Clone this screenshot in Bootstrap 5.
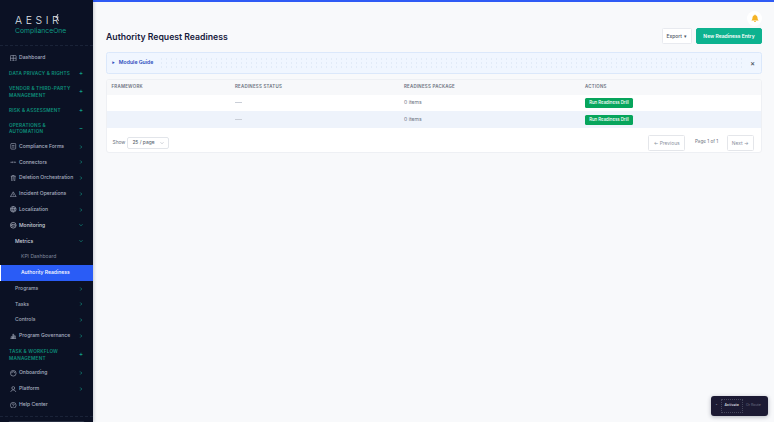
<!DOCTYPE html>
<html lang="en">
<head>
<meta charset="UTF-8">
<title>Authority Request Readiness</title>
<link href="https://cdn.jsdelivr.net/npm/bootstrap@5.3.2/dist/css/bootstrap.min.css" rel="stylesheet">
<style>
html, body { height: 100%; overflow: hidden; }
body { font-family: Inter, "Liberation Sans", sans-serif; font-size: 5px; background: #f8f9fb; color: #1f2937; }
.top-strip { height: 2px; background: #2f5bf5; }
.side { width: 93px; height: 422px; background: #0b1124; flex: none; overflow: hidden; box-shadow: 1px 0 3px rgba(15,23,42,.2); position: relative; }
.brand { height: 46px; padding: 15px 0 0 15px; border-bottom: 1px dashed #1a2338; }
.brand-name { font-size: 10.5px; letter-spacing: 3.6px; color: #dfe2e8; line-height: 12px; font-weight: 300; position: relative; }
.brand-name svg { position: absolute; left: 40px; top: -1px; width: 4px; height: 8px; }
.brand-sub { font-size: 6.8px; color: #0f9a83; line-height: 8px; }
.side-item { display: flex; align-items: center; height: 15.8px; padding: 0 10px 0 10px; color: #a9b0c0; font-weight: 500; font-size: 5.05px; }
.side-item svg.ic { width: 6.5px; height: 6.5px; margin-right: 2.5px; flex: none; }
.side-item .lbl { flex: 1; white-space: nowrap; }
.side-item .chev { width: 4px; height: 4px; flex: none; }
.side-item.sub { padding-left: 15px; color: #a0a8ba; }
.side-item.subsub { padding-left: 21px; color: #7f879b; font-weight: 400; }
.side-item.now { background: #2a5cf6; color: #fff; border-left: 1px solid #fff; padding-left: 20px; }
.side-item.open { color: #cfd3de; }
.side-head { display: flex; align-items: center; padding: 4.3px 10px 4.3px 9px; color: #0d8f7a; font-weight: 600; font-size: 4.7px; letter-spacing: .2px; line-height: 6.4px; }
.side-head .lbl { flex: 1; padding-right: 6px; }
.side-head .sym { width: 4px; text-align: center; font-size: 6px; color: #12a08a; }
.side-foot { position: absolute; left: 0; right: 0; top: 416px; height: 8px; border-top: 1px dashed #1a2338; padding: 4px 8px 0; }
.side-foot div { height: 6px; border: 1px solid #2a3145; border-radius: 2px; }
.page { min-width: 0; padding: 2px 12px 0 13px; position: relative; }
.bell-wrap { height: 10px; position: relative; }
.bell { position: absolute; right: 0; top: 8.5px; width: 15px; height: 15px; background: #fff; border-radius: 50%; display: flex; align-items: center; justify-content: center; }
.head-row { padding-top: 16px; height: 40px; }
.page-title { font-size: 8.7px; font-weight: 600; color: #17203b; margin: 1px 0 0; line-height: 16px; }
.btn-exp { background: #fff; border: 1px solid #e8eaef; color: #4b5563; font-size: 4.9px; font-weight: 500; height: 16px; width: 30px; padding: 0; border-radius: 1.5px; line-height: 14px; }
.btn-new { background: #0db28f; border: 1px solid #0db28f; color: #fff; font-size: 5px; font-weight: 600; height: 16px; width: 66px; padding: 0; border-radius: 2px; line-height: 14px; }
.guide { height: 22px; background: #f0f6ff; border: 1px solid #dbe8fb; border-radius: 2.5px; padding: 0 5px; color: #2c4dbd; font-weight: 600; font-size: 5.15px; }
.guide .arrow { font-size: 3px; margin-right: 4px; vertical-align: .5px; }
.guide .dots { height: 12px; margin: 0 6px 0 6px; background-image: radial-gradient(circle, #e2ebf8 .5px, transparent .6px); background-size: 5px 4px; }
.guide .shut { color: #4b5563; font-size: 7px; line-height: 1; margin-right: 1px; }
.grid-card { margin-top: 5px; background: #fff; border: 1px solid #eef0f4; border-radius: 3px; overflow: hidden; }
.grid-table { width: 100%; table-layout: fixed; margin: 0; border-collapse: collapse; }
.grid-table th { height: 14.5px; background: #f7f8fa; padding: 0 4.5px; font-size: 4.4px; font-weight: 600; letter-spacing: .25px; color: #6b7280; white-space: nowrap; }
.grid-table td { height: 16.7px; padding: 0 4.5px; font-size: 5.1px; color: #6b7280; vertical-align: middle; }
.grid-table tr.alt td { background-color: #eef3fb; background-image: radial-gradient(circle, #e4eaf5 .5px, transparent .6px); background-size: 2px 2px; }
.dash { display: block; width: 7px; height: 1px; background: #c9ced7; }
.btn-drill { background: #07a55c; color: #fff; font-size: 4.3px; font-weight: 500; border: 0; border-radius: 1.5px; height: 10px; width: 48px; padding: 0; line-height: 10px; white-space: nowrap; }
.grid-foot { height: 24.5px; padding: 5px 7px 0 5.5px; color: #6b7280; font-size: 4.9px; }
.size-pick { width: 41.5px; height: 12px; border: 1px solid #e2e5ea; border-radius: 2px; padding: 0 4px; color: #4b5563; background: #fff; margin-left: 2px; }
.size-pick svg { width: 4px; height: 4px; }
.pg-btn { height: 16px; background: #fff; border: 1px solid #e4e6ea; border-radius: 1.5px; color: #8a919e; font-size: 4.9px; padding: 0; line-height: 14px; }
.pg-prev { width: 37.5px; }
.pg-next { width: 27.5px; }
.pg-text { margin: 0 8.5px 0 9.5px; font-size: 4.6px; }
.float-bar { position: absolute; right: 6px; top: 396px; width: 57px; height: 20px; background: #1c1a33; border-radius: 3px; box-shadow: 0 1px 4px rgba(15,23,42,.3); color: #6f7286; font-size: 3.6px; gap: 3px; padding: 0 4.500px; white-space: nowrap; }
.float-bar b { color: #cfd2dc; font-weight: 600; border: 1px dotted #45475c; padding: 3px 3px; }
</style>
</head>
<body>
<div class="top-strip"></div>
<div class="d-flex" style="margin-top:-2px">
  <nav class="side">
    <div class="brand">
      <div class="brand-name">AESIR<svg viewBox="0 0 4 8" fill="none" stroke="#dfe2e8" stroke-width=".9"><path d="M3 0L1.500 3M.5 3.500l3-.5M2 3.500L3.500 7"/></svg></div>
      <div class="brand-sub">ComplianceOne</div>
    </div>
    <div style="padding-top:4px">
      <div class="side-item"><svg class="ic" viewBox="0 0 16 16" fill="none" stroke="currentColor" stroke-width="1.5"><rect x="1" y="1" width="14" height="14" rx="2"/><path d="M8 1v14M1 8h14"/></svg><span class="lbl">Dashboard</span></div>
      <div class="side-head"><span class="lbl">DATA PRIVACY &amp; RIGHTS</span><span class="sym">+</span></div>
      <div class="side-head"><span class="lbl">VENDOR &amp; THIRD-PARTY MANAGEMENT</span><span class="sym">+</span></div>
      <div class="side-head"><span class="lbl">RISK &amp; ASSESSMENT</span><span class="sym">+</span></div>
      <div class="side-head"><span class="lbl">OPERATIONS &amp; AUTOMATION</span><span class="sym">−</span></div>
      <div class="side-item"><svg class="ic" viewBox="0 0 16 16" fill="none" stroke="currentColor" stroke-width="1.5"><rect x="2" y="1" width="12" height="14" rx="2"/><path d="M5 6h6M5 10h6"/></svg><span class="lbl">Compliance Forms</span><svg class="chev" viewBox="0 0 8 8" fill="none" stroke="#12a08a" stroke-width="1.3"><path d="M2.500 1l3 3-3 3"/></svg></div>
      <div class="side-item"><svg class="ic" viewBox="0 0 16 16" fill="none" stroke="currentColor" stroke-width="1.5"><path d="M1 8h4M11 8h4M6 6v4M10 6v4"/></svg><span class="lbl">Connectors</span><svg class="chev" viewBox="0 0 8 8" fill="none" stroke="#12a08a" stroke-width="1.3"><path d="M2.500 1l3 3-3 3"/></svg></div>
      <div class="side-item"><svg class="ic" viewBox="0 0 16 16" fill="none" stroke="currentColor" stroke-width="1.5"><path d="M2 3h12M6 3V1h4v2M3.500 3l1 12h7l1-12M6 7h4M6 10h4"/></svg><span class="lbl">Deletion Orchestration</span><svg class="chev" viewBox="0 0 8 8" fill="none" stroke="#12a08a" stroke-width="1.3"><path d="M2.500 1l3 3-3 3"/></svg></div>
      <div class="side-item"><svg class="ic" viewBox="0 0 16 16" fill="none" stroke="currentColor" stroke-width="1.5"><path d="M8 2l7 12H1zM8 6.500v4M8 11.500v1"/></svg><span class="lbl">Incident Operations</span><svg class="chev" viewBox="0 0 8 8" fill="none" stroke="#12a08a" stroke-width="1.3"><path d="M2.500 1l3 3-3 3"/></svg></div>
      <div class="side-item"><svg class="ic" viewBox="0 0 16 16" fill="none" stroke="currentColor" stroke-width="1.5"><circle cx="8" cy="8" r="7"/><path d="M1 6h14M1 10h14M8 1c-4 4-4 10 0 14M8 1c4 4 4 10 0 14"/></svg><span class="lbl">Localization</span><svg class="chev" viewBox="0 0 8 8" fill="none" stroke="#12a08a" stroke-width="1.3"><path d="M2.500 1l3 3-3 3"/></svg></div>
      <div class="side-item open"><svg class="ic" viewBox="0 0 16 16" fill="none" stroke="currentColor" stroke-width="1.5"><circle cx="8" cy="8" r="7"/><path d="M2.500 8c2-3 9-3 11 0-2 3-9 3-11 0z"/></svg><span class="lbl">Monitoring</span><svg class="chev" viewBox="0 0 8 8" fill="none" stroke="#12a08a" stroke-width="1.3"><path d="M1 2.500l3 3 3-3"/></svg></div>
      <div class="side-item sub open"><span class="lbl">Metrics</span><svg class="chev" viewBox="0 0 8 8" fill="none" stroke="#12a08a" stroke-width="1.3"><path d="M1 2.500l3 3 3-3"/></svg></div>
      <div class="side-item subsub"><span class="lbl">KPI Dashboard</span></div>
      <div class="side-item now"><span class="lbl">Authority Readiness</span></div>
      <div class="side-item sub"><span class="lbl">Programs</span><svg class="chev" viewBox="0 0 8 8" fill="none" stroke="#12a08a" stroke-width="1.3"><path d="M2.500 1l3 3-3 3"/></svg></div>
      <div class="side-item sub"><span class="lbl">Tasks</span><svg class="chev" viewBox="0 0 8 8" fill="none" stroke="#12a08a" stroke-width="1.3"><path d="M2.500 1l3 3-3 3"/></svg></div>
      <div class="side-item sub"><span class="lbl">Controls</span><svg class="chev" viewBox="0 0 8 8" fill="none" stroke="#12a08a" stroke-width="1.3"><path d="M2.500 1l3 3-3 3"/></svg></div>
      <div class="side-item"><svg class="ic" viewBox="0 0 16 16" fill="none" stroke="currentColor" stroke-width="1.5"><path d="M1 14h14M3 14V9h3v5M7 14V3h2v11M10 14V7h3v7"/></svg><span class="lbl">Program Governance</span><svg class="chev" viewBox="0 0 8 8" fill="none" stroke="#12a08a" stroke-width="1.3"><path d="M2.500 1l3 3-3 3"/></svg></div>
      <div class="side-head"><span class="lbl">TASK &amp; WORKFLOW MANAGEMENT</span><span class="sym">+</span></div>
      <div class="side-item"><svg class="ic" viewBox="0 0 16 16" fill="none" stroke="currentColor" stroke-width="1.5"><circle cx="8" cy="8" r="7"/><path d="M4 8a4 4 0 0 1 8 0"/></svg><span class="lbl">Onboarding</span><svg class="chev" viewBox="0 0 8 8" fill="none" stroke="#12a08a" stroke-width="1.3"><path d="M2.500 1l3 3-3 3"/></svg></div>
      <div class="side-item"><svg class="ic" viewBox="0 0 16 16" fill="none" stroke="currentColor" stroke-width="1.5"><circle cx="8" cy="5" r="3.500"/><path d="M2 15c0-7 12-7 12 0"/></svg><span class="lbl">Platform</span><svg class="chev" viewBox="0 0 8 8" fill="none" stroke="#12a08a" stroke-width="1.3"><path d="M2.500 1l3 3-3 3"/></svg></div>
      <div class="side-item"><svg class="ic" viewBox="0 0 16 16" fill="none" stroke="currentColor" stroke-width="1.5"><circle cx="8" cy="8" r="7"/><path d="M6 6.500a2 2 0 1 1 3 1.800c-.7.4-1 .8-1 1.700M8 11.500v1"/></svg><span class="lbl">Help Center</span></div>
    </div>
    <div class="side-foot"><div></div></div>
  </nav>
  <main class="page flex-grow-1">
    <div class="bell-wrap">
      <div class="bell"><svg width="8" height="8" viewBox="0 0 16 16" fill="#f5b324"><path d="M8 16a2 2 0 0 0 2-2H6a2 2 0 0 0 2 2zM8 1a1 1 0 0 0-1 1v.5C4.700 3 3 5 3 7.500c0 1.500-.5 3.500-2 5v.5h14v-.5c-1.500-1.500-2-3.500-2-5C13 5 11.300 3 9 2.500V2a1 1 0 0 0-1-1z"/></svg></div>
    </div>
    <div class="head-row d-flex justify-content-between align-items-start">
      <h1 class="page-title">Authority Request Readiness</h1>
      <div class="d-flex gap-1">
        <button class="btn-exp">Export &nbsp;▾</button>
        <button class="btn-new">New Readiness Entry</button>
      </div>
    </div>
    <div class="guide d-flex align-items-center">
      <span class="text-nowrap"><span class="arrow">▶</span>Module Guide</span>
      <span class="dots flex-grow-1"></span>
      <span class="shut">×</span>
    </div>
    <div class="grid-card">
      <table class="grid-table">
        <colgroup><col style="width:123.5px"><col style="width:169px"><col style="width:181px"><col></colgroup>
        <thead><tr><th>FRAMEWORK</th><th>READINESS STATUS</th><th>READINESS PACKAGE</th><th>ACTIONS</th></tr></thead>
        <tbody>
          <tr><td></td><td><span class="dash"></span></td><td>0 items</td><td><button class="btn-drill">Run Readiness Drill</button></td></tr>
          <tr class="alt"><td></td><td><span class="dash"></span></td><td>0 items</td><td><button class="btn-drill">Run Readiness Drill</button></td></tr>
        </tbody>
      </table>
      <div class="grid-foot d-flex align-items-center justify-content-between">
        <div class="d-flex align-items-center"><span>Show</span>
          <div class="size-pick d-flex align-items-center justify-content-between"><span>25 / page</span><svg viewBox="0 0 8 8" fill="none" stroke="#9ca3af" stroke-width="1"><path d="M1 2.500l3 3 3-3"/></svg></div>
        </div>
        <div class="d-flex align-items-center"><button class="pg-btn pg-prev">← Previous</button><span class="pg-text">Page 1 of 1</span><button class="pg-btn pg-next">Next →</button></div>
      </div>
    </div>
    <div class="float-bar d-flex align-items-center"><span>▪</span><b>Activate</b><span>Or Route</span></div>
  </main>
</div>
</body>
</html>
